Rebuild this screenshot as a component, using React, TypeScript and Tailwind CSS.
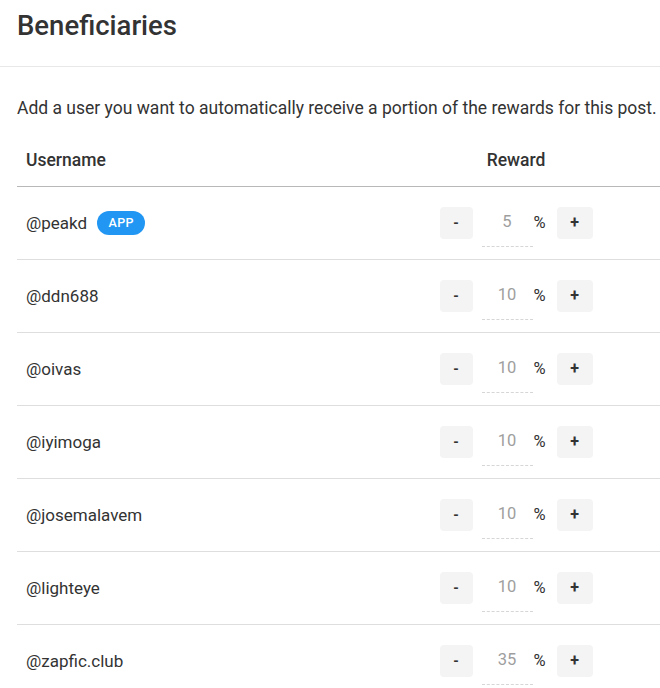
import React from "react";

const rows = [
  { name: "@peakd", value: 5, app: true },
  { name: "@ddn688", value: 10 },
  { name: "@oivas", value: 10 },
  { name: "@iyimoga", value: 10 },
  { name: "@josemalavem", value: 10 },
  { name: "@lighteye", value: 10 },
  { name: "@zapfic.club", value: 35 },
];

export default function App() {
  return (
    <div
      className="w-[660px] h-[688px] overflow-hidden bg-white text-[#333]"
      style={{ fontFamily: "Roboto, 'Liberation Sans', sans-serif" }}
    >
      <div className="h-[67px] border-b border-[#e8e8e8] pl-[17px] pt-[9px]">
        <h1 className="text-[27.5px] leading-[34px] font-medium text-[#333]">Beneficiaries</h1>
      </div>
      <div className="pl-[17px]">
        <p className="mt-[29px] text-[17.5px] leading-[24px] whitespace-nowrap">
          Add a user you want to automatically receive a portion of the rewards for this post.
        </p>
        <div className="w-[643px]">
          <div className="grid grid-cols-[1fr_288px] pt-[28px] pb-[14px] border-b border-[#b8b8b8] text-[17.5px] leading-[24px] font-medium">
            <div className="pl-[9px]">Username</div>
            <div className="text-center">Reward</div>
          </div>
          {rows.map((r) => (
            <div
              key={r.name}
              className="grid grid-cols-[1fr_288px] h-[73px] border-b border-[#dedede] items-center"
            >
              <div className="pl-[9px] flex items-center text-[17px] leading-[24px]">
                <span>{r.name}</span>
                {r.app && (
                  <span className="ml-[10px] h-[24px] w-[48px] rounded-full bg-[#2196f3] text-white text-[12.5px] font-medium flex items-center justify-center tracking-[0.3px]">
                    APP
                  </span>
                )}
              </div>
              <div className="flex items-center justify-center">
                <button className="w-[33px] h-[32px] rounded-[4px] bg-[#f4f4f4] text-[14px] font-bold text-[#333] flex items-center justify-center">
                  -
                </button>
                <div className="ml-[9px] w-[51px] h-[47px] border-b border-dashed border-[#d6d6d6] flex items-center justify-center text-[16.5px] text-[#9e9e9e]">
                  {r.value}
                </div>
                <span className="ml-[1px] w-[14px] text-[16.5px] text-[#333]">%</span>
                <button className="ml-[9px] w-[36px] h-[32px] rounded-[4px] bg-[#f4f4f4] text-[16px] font-bold text-[#333] flex items-center justify-center">
                  +
                </button>
              </div>
            </div>
          ))}
        </div>
      </div>
    </div>
  );
}
